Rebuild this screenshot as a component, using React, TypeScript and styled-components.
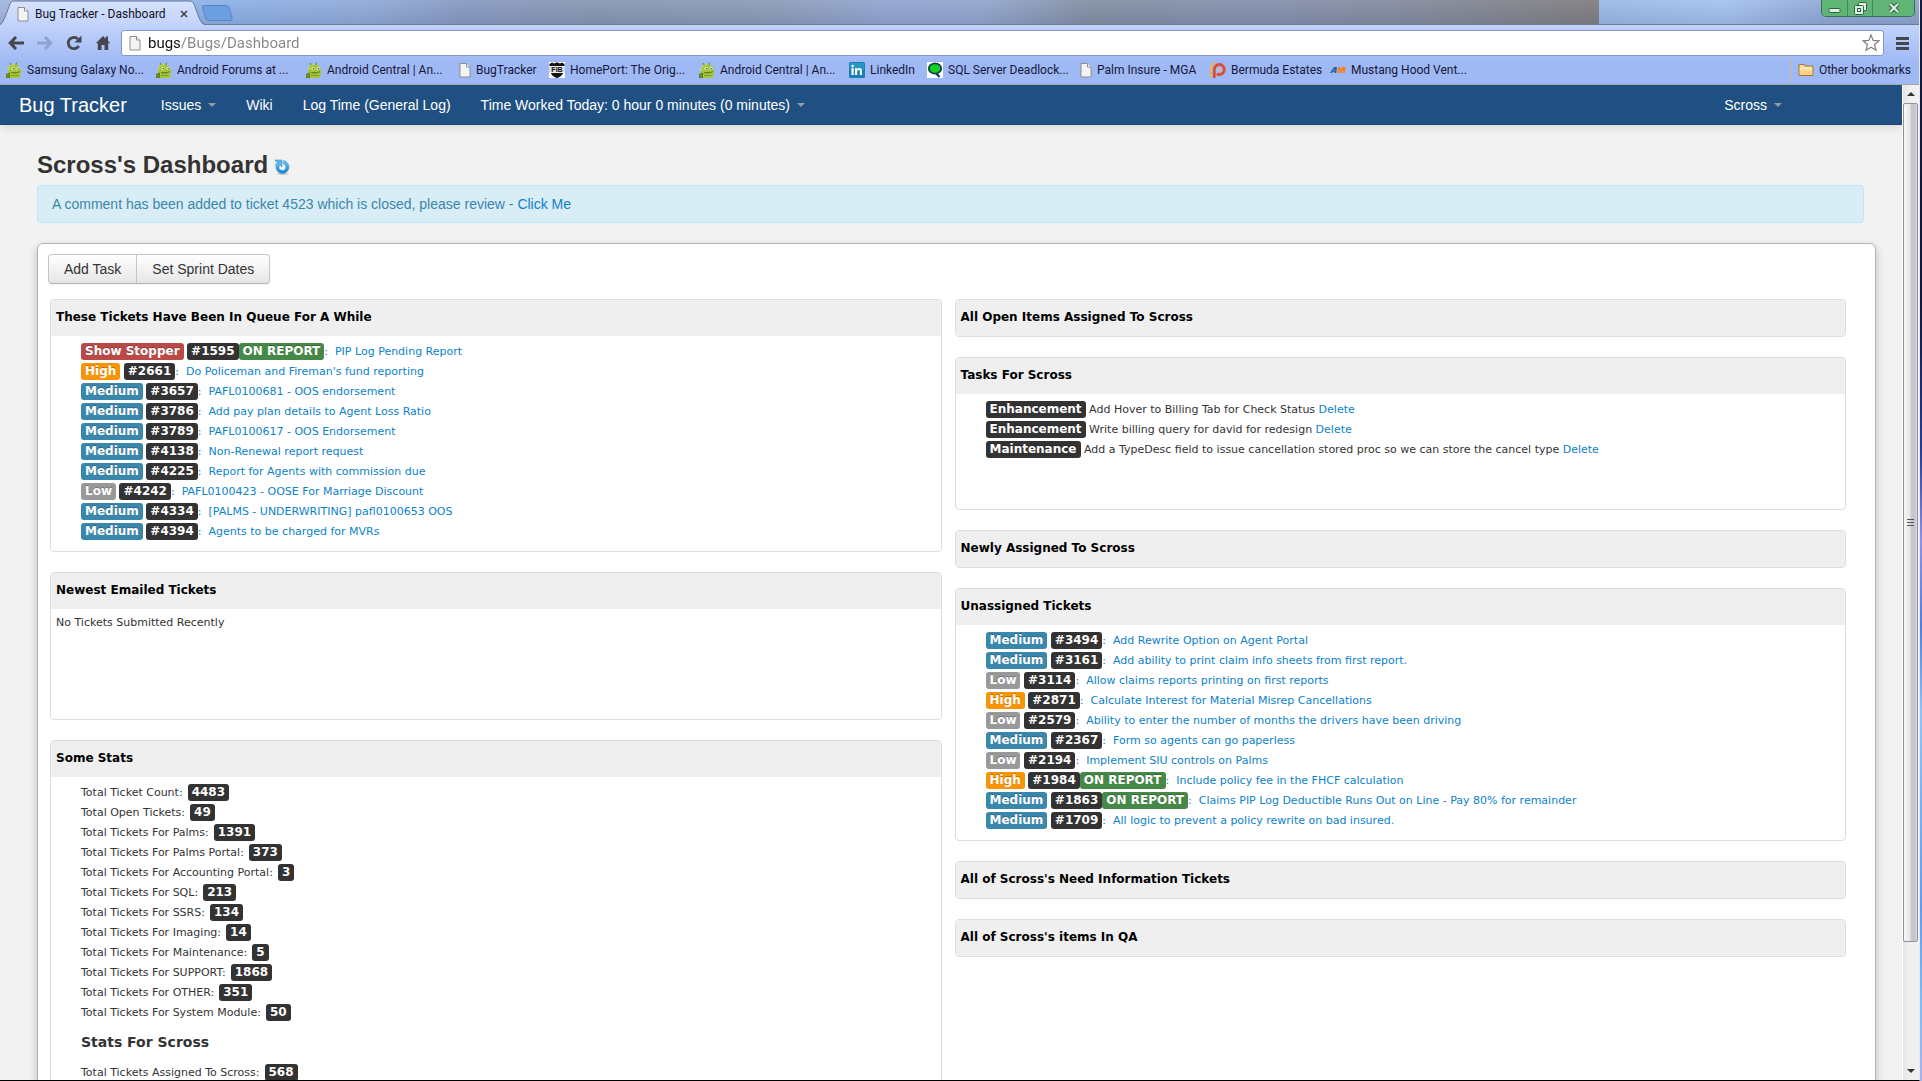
import React from "react";
import styled, { createGlobalStyle, css } from "styled-components";

const ui = `Roboto, "Open Sans", sans-serif`;
const arial = `"Liberation Sans", Arial, sans-serif`;
const verdana = `"DejaVu Sans", Verdana, sans-serif`;

const GlobalStyle = createGlobalStyle`
  *, *::before, *::after { box-sizing: border-box; }
  body { margin: 0; overflow: hidden; font-family: ${arial}; font-size: 14px; line-height: 20px; color: #333; }
  a { color: #0c82cb; text-decoration: none; }
  h1, h2, h3, ul, p { margin: 0; padding: 0; }
  ul { list-style: none; }
  button { padding: 0; border: 0; background: none; font: inherit; color: inherit; }
  svg { display: block; flex: none; }
`;

const Desktop = styled.div`
  display: flex;
  height: 100vh;
  background: linear-gradient(#131a3a 0, #10163a 28%, #243f9c 42%, #8d90ea 50%, #4d7fe0 58%, #8cc4fa 66%, #5f9cf0 84%, #7bbdfc 93%, #a9b0ee 100%);
`;

const BrowserWindow = styled.div`
  flex: 1;
  min-width: 0;
  margin-right: 2px;
  display: flex;
  flex-direction: column;
  background: #9fb9f4;
  border-right: 1px solid #e3ebfb;
  border-bottom: 1px solid #000;
`;

const TitleBar = styled.header`
  display: flex;
  align-items: flex-start;
  height: 25px;
  flex: none;
  border-bottom: 1px solid #6c7c9c;
  background:
    linear-gradient(rgba(255, 255, 255, 0.05), rgba(40, 50, 90, 0.12)),
    linear-gradient(90deg, #a5b8de 0, #8fb2e8 12%, #92add9 19%, #8a9cc4 24%, #8a98b3 31%, #8e9db8 40%, #94a7d2 46%, #95a8d0 51%, #8590a4 57%, #8793b0 65%, #868da0 73%, #817f80 83.3%, #9dbbe6 83.3%, #a6c3f1 90%, #92acd8 95%, #8fa5cf 100%);
`;

const Tab = styled.div`
  position: relative;
  display: flex;
  align-items: center;
  width: 205px;
  height: 25px;
  padding: 2px 14px 0 17px;
  font: 12px/20px ${ui};
  color: #141428;
`;

const TabShape = styled.svg`
  position: absolute;
  left: 0;
  top: 0;
`;

const TabLabel = styled.span`
  position: relative;
  flex: 1;
  margin-left: 6px;
  white-space: nowrap;
`;

const TabIcon = styled.span`
  position: relative;
`;

const TabClose = styled.button`
  position: relative;
  width: 14px;
  height: 14px;
  display: grid;
  place-items: center;
`;

const NewTab = styled.button`
  margin-top: 5px;
  margin-left: -4px;
`;

const WindowControls = styled.div`
  display: flex;
  height: 17px;
  margin-left: auto;
  margin-right: 4px;
  border: 1px solid #3b6e55;
  border-top: 0;
  border-radius: 0 0 5px 5px;
  overflow: hidden;
`;

const WindowButton = styled.button<{ $wide?: boolean }>`
  width: ${(p) => (p.$wide ? 42 : 25)}px;
  display: grid;
  place-items: center;
  background: #60b476;
  & + & { border-left: 1px solid #3f8a5c; }
`;

const Toolbar = styled.div`
  display: flex;
  align-items: center;
  height: 35px;
  flex: none;
  padding: 1px 2px 0 1px;
  background: linear-gradient(#c2d3fb, #a2bbf5);
`;

const ToolButton = styled.button`
  width: 29px;
  height: 25px;
  display: grid;
  place-items: center;
  color: #46474c;
`;

const Omnibox = styled.label`
  flex: 1;
  display: flex;
  align-items: center;
  height: 26px;
  margin: 0 4px;
  padding: 0 3px 0 7px;
  background: #fff;
  border: 1px solid #7f97cd;
  border-radius: 3px;
`;

const Address = styled.input`
  flex: 1;
  min-width: 0;
  height: 22px;
  margin-left: 7px;
  padding: 0;
  border: 0;
  outline: 0;
  font: 15px/22px ${ui};
  color: transparent;
  background: linear-gradient(90deg, #111 33px, #868686 33px);
  -webkit-background-clip: text;
  background-clip: text;
`;

const BookmarkBar = styled.nav`
  display: flex;
  align-items: center;
  height: 25px;
  flex: none;
  padding: 0 8px 4px 6px;
  border-bottom: 1px solid #a5a6a4;
  font: 12px/16px ${ui};
`;

const Bookmark = styled.a<{ $width: number }>`
  display: flex;
  align-items: center;
  gap: 5px;
  width: ${(p) => p.$width}px;
  color: #16163a;
  white-space: nowrap;
`;

const OtherBookmarks = styled.button`
  display: flex;
  align-items: center;
  gap: 5px;
  height: 23px;
  margin-left: auto;
  padding-left: 7px;
  border-left: 1px solid #d9b98e;
  color: #16163a;
`;

const Viewport = styled.div`
  display: flex;
  flex: 1;
  min-height: 0;
`;

const Page = styled.div`
  flex: 1;
  min-width: 0;
  overflow: hidden;
  background: #f2f2f2;
`;

const NavBar = styled.nav`
  display: flex;
  align-items: center;
  height: 40px;
  padding: 0 105px 0 19px;
  background: #205081;
  border-bottom: 1px solid #1a4472;
  box-shadow: 0 1px 10px rgba(0, 0, 0, 0.15);
`;

const Brand = styled.a`
  margin-right: 19px;
  font-size: 20px;
  color: #fff;
`;

const NavLink = styled.a<{ $right?: boolean }>`
  display: flex;
  align-items: center;
  gap: 7px;
  padding: 0 15px;
  color: #fff;
  ${(p) => p.$right && css`margin-left: auto;`}
`;

const Caret = styled.span`
  border: 4px solid transparent;
  border-top-color: #909cac;
  border-bottom: 0;
`;

const Main = styled.main`
  padding: 20px 26px 0 37px;
`;

const Title = styled.h1`
  display: flex;
  align-items: center;
  gap: 6px;
  font-size: 24px;
  line-height: 40px;
`;

const RefreshButton = styled.button`
  padding-top: 4px;
`;

const Alert = styled.div`
  height: 38px;
  margin: 0 12px 20px 0;
  padding: 8px 14px;
  border: 1px solid #bce8f1;
  border-radius: 4px;
  background: #d9edf7;
  color: #3a87ad;
`;

const Panel = styled.section`
  padding: 10px 29px 40px 10px;
  border: 1px solid #b3b3b3;
  border-radius: 6px;
  background: #fff;
  box-shadow: 0 4px 10px rgba(0, 0, 0, 0.22);
`;

const ButtonGroup = styled.div`
  display: flex;
  margin-bottom: 15px;
`;

const Button = styled.button`
  height: 30px;
  padding: 0 15px;
  border: 1px solid #c5c5c5;
  border-bottom-color: #b3b3b3;
  background: linear-gradient(#fff, #e6e6e6);
  box-shadow: 0 1px 2px rgba(0, 0, 0, 0.05);
  line-height: 20px;
  &:first-child { border-radius: 4px 0 0 4px; }
  &:last-child { border-radius: 0 4px 4px 0; }
  & + & { margin-left: -1px; }
`;

const Columns = styled.div`
  display: grid;
  grid-template-columns: 1fr 1fr;
  gap: 13px;
  padding-left: 2px;
  font-family: ${verdana};
  font-size: 11px;
`;

const Column = styled.div`
  display: flex;
  flex-direction: column;
  gap: 20px;
`;

const Card = styled.section`
  border: 1px solid #dddddd;
  border-radius: 4px;
  overflow: hidden;
`;

const CardTitle = styled.h2`
  height: 36px;
  padding: 0 5px;
  background: #efefef;
  color: #000;
  font-size: 12px;
  line-height: 35px;
`;

const CardBody = styled.div<{ $min?: number }>`
  min-height: ${(p) => p.$min ?? 0}px;
  padding: 6px 5px 9px 30px;
`;

const EmptyBody = styled.p`
  min-height: 110px;
  padding: 4px 5px;
`;

const Row = styled.li`
  height: 20px;
  white-space: nowrap;
`;

const tones = {
  dark: "#333333",
  red: "#b94a48",
  orange: "#f89406",
  blue: "#3a87ad",
  gray: "#999999",
  green: "#468847",
};

const Badge = styled.span<{ $tone: keyof typeof tones }>`
  display: inline-block;
  padding: 1px 4px 2px;
  border-radius: 3px;
  background: ${(p) => tones[p.$tone]};
  color: #fff;
  font-size: 12px;
  font-weight: bold;
  line-height: 14px;
  text-shadow: 0 -1px 0 rgba(0, 0, 0, 0.25);
`;

const StatName = styled.span`
  margin-right: 5px;
`;

const SubHeading = styled.h3`
  margin: 9px 0 11px;
  font-size: 14px;
  line-height: 20px;
`;

const ScrollBar = styled.div`
  display: flex;
  flex-direction: column;
  align-items: center;
  width: 17px;
  padding-right: 1px;
  border-left: 1px solid #fff;
  background: linear-gradient(90deg, #e4e4e4, #efefef 40%, #f1f1f1);
`;

const ScrollArrow = styled.button`
  width: 15px;
  height: 18px;
  display: grid;
  place-items: center;
`;

const ScrollTrack = styled.div`
  flex: 1;
  width: 15px;
  display: grid;
  grid-template-rows: 7fr 1fr;
`;

const ScrollThumb = styled.div`
  display: grid;
  place-items: center;
  border: 1px solid #929294;
  border-radius: 2px;
  background: linear-gradient(90deg, #f7f7f7, #e6e6e8 45%, #c9c9ce 55%, #c3c3ca 85%, #dedee2);
`;

const DocIcon = () => (
  <svg width="12" height="16" viewBox="0 0 12 16">
    <path d="M1 1.5h6.5l3.5 3.5v10H1z" fill="#f4f4f4" stroke="#8d8d8d" />
    <path d="M7.5 1.5V5H11" fill="#fff" stroke="#8d8d8d" />
  </svg>
);

const AndroidIcon = () => (
  <svg width="16" height="16" viewBox="0 0 16 16">
    <path d="M4 1.2 5.600 3.400M10.600.600 9.800 3" stroke="#6f8c24" strokeWidth="1.200" />
    <path d="M2 9C1.600 5 4.300 2.400 8 2.400c3.600 0 6.100 2 6.400 5.200L15.600 8l-.800 3.500c-.6 1.600-1 3-1 4.500H1c0-2 .100-3.200 1-4.500z" fill="#a4c639" />
    <path d="M2.200 8.500C1.800 5 4.500 2.600 8 2.600" stroke="#c5e05f" fill="none" />
    <circle cx="7" cy="6.600" r="1.600" fill="#e9f4c4" />
    <circle cx="12" cy="6.600" r="1.500" fill="#e9f4c4" />
    <circle cx="7.300" cy="6.700" r=".7" fill="#32400f" />
    <circle cx="12.200" cy="6.700" r=".7" fill="#32400f" />
    <path d="M5 10.300c2.500 1.300 5 .9 9-.6M0 12.500 3.500 11v5H0z" fill="#6f9125" stroke="#55701b" strokeWidth=".8" />
    <path d="M5 13.500h8" stroke="#7d9e2b" />
  </svg>
);

const ShieldIcon = () => (
  <svg width="16" height="16" viewBox="0 0 16 16">
    <path d="M0 0h16v16H0z" fill="#fff" />
    <path d="M.5 2 3 .5 5 1.400 8 .300l3 1.100L13 .500 15.500 2v2H.5zM2 11h12c-.5 2.500-3 4-6 5-3-1-5.500-2.500-6-5z" fill="#111" />
    <path d="M0 4.500h16v6H0z" fill="#ddd" />
    <text x="8" y="10" textAnchor="middle" fontSize="7" fontWeight="bold" fontFamily="Liberation Sans, sans-serif" fill="#111">FIB</text>
  </svg>
);

const LinkedInIcon = () => (
  <svg width="16" height="16" viewBox="0 0 16 16">
    <rect width="16" height="16" rx="1.500" fill="#1681b2" />
    <rect x="1" y="1" width="14" height="7" fill="#38a3cd" opacity=".6" />
    <path d="M2.500 6.200h2.200V13H2.500zM6 6.200h2.100v.9c.5-.7 1.200-1.100 2.200-1.100 2 0 2.700 1.200 2.700 3.200V13h-2.200V9.600c0-1-.3-1.700-1.200-1.700-1 0-1.400.7-1.400 1.700V13H6z" fill="#fff" />
    <circle cx="3.600" cy="4" r="1.300" fill="#fff" />
  </svg>
);

const QIcon = () => (
  <svg width="16" height="16" viewBox="0 0 16 16">
    <path d="M0 0h16v16H0z" fill="#fff" />
    <path d="m8 10 4.500 5" stroke="#15307c" strokeWidth="2.200" />
    <ellipse cx="8" cy="6.500" rx="6.200" ry="5.200" fill="#12d31d" stroke="#1a3f4c" strokeWidth="1.800" />
  </svg>
);

const PIcon = () => (
  <svg width="16" height="16" viewBox="0 0 16 16" fill="none">
    <path d="M1 15V6.500C1 3 2.500 1.500 5 .800" stroke="#eeb255" strokeWidth="1.800" />
    <path d="M4.300 16V7.500a5 5 0 1 1 5 5c-1 0-1.800-.2-2.500-.700" stroke="#e2492f" strokeWidth="2.800" />
    <circle cx="9.200" cy="7.500" r="1.600" fill="#ecb98a" />
  </svg>
);

const AmIcon = () => (
  <svg width="16" height="16" viewBox="0 0 16 16">
    <path d="M0 11 4 5h3L6.200 11H4.300l.2-1.300H2.800L2 11zM3.700 8.400h1L5 6.500z" fill="#2460a8" />
    <path d="m7 11 1.200-6h2l.4 2.600L12 5h3.800l-1.200 6h-1.900l.6-3.200L11 11H9.900l-.500-3L8.800 11z" fill="#f77f1e" />
  </svg>
);

const FolderIcon = () => (
  <svg width="16" height="16" viewBox="0 0 16 16">
    <path d="M1 13.500v-11h5l1 1.500h8v9.500z" fill="#fddc98" stroke="#a5753a" />
    <path d="M2 6.500h12" stroke="#fff0c8" />
    <path d="M2 9h12v4H2z" fill="#f9cb7b" opacity=".7" />
  </svg>
);

const RefreshIcon = () => (
  <svg width="16" height="16" viewBox="0 0 16 16">
    <defs>
      <linearGradient id="ring" x1="0" y1="0" x2="0" y2="1">
        <stop offset="0" stopColor="#7cc6f3" />
        <stop offset="0.500" stopColor="#3aa3e6" />
        <stop offset="1" stopColor="#1583d3" />
      </linearGradient>
    </defs>
    <ellipse cx="8.500" cy="15" rx="6" ry="1" fill="#cfcfcf" />
    <path d="M9.500 1.600A6.500 6.500 0 1 1 2 7.500L5.200 7a3.400 3.400 0 1 0 4.300-2.100z" fill="url(#ring)" stroke="#2a86c6" strokeWidth=".5" />
    <path d="M1 1h7v7L6 6 3.600 8.200 1.200 6.200 3.300 3.800z" fill="#5db6ee" stroke="#2a86c6" strokeWidth=".5" />
  </svg>
);

const bookmarks: { title: string; width: number; icon: React.ReactNode }[] = [
  { title: "Samsung Galaxy No...", width: 150, icon: <AndroidIcon /> },
  { title: "Android Forums at ...", width: 150, icon: <AndroidIcon /> },
  { title: "Android Central | An...", width: 153, icon: <AndroidIcon /> },
  { title: "BugTracker", width: 90, icon: <DocIcon /> },
  { title: "HomePort: The Orig...", width: 150, icon: <ShieldIcon /> },
  { title: "Android Central | An...", width: 150, icon: <AndroidIcon /> },
  { title: "LinkedIn", width: 78, icon: <LinkedInIcon /> },
  { title: "SQL Server Deadlock...", width: 153, icon: <QIcon /> },
  { title: "Palm Insure - MGA", width: 130, icon: <DocIcon /> },
  { title: "Bermuda Estates", width: 120, icon: <PIcon /> },
  { title: "Mustang Hood Vent...", width: 150, icon: <AmIcon /> },
];

type Priority = "Show Stopper" | "High" | "Medium" | "Low";
type Ticket = { priority: Priority; id: number; title: string; onReport?: boolean };

const priorityTone: Record<Priority, keyof typeof tones> = {
  "Show Stopper": "red",
  High: "orange",
  Medium: "blue",
  Low: "gray",
};

const queued: Ticket[] = [
  { priority: "Show Stopper", id: 1595, title: "PIP Log Pending Report", onReport: true },
  { priority: "High", id: 2661, title: "Do Policeman and Fireman's fund reporting" },
  { priority: "Medium", id: 3657, title: "PAFL0100681 - OOS endorsement" },
  { priority: "Medium", id: 3786, title: "Add pay plan details to Agent Loss Ratio" },
  { priority: "Medium", id: 3789, title: "PAFL0100617 - OOS Endorsement" },
  { priority: "Medium", id: 4138, title: "Non-Renewal report request" },
  { priority: "Medium", id: 4225, title: "Report for Agents with commission due" },
  { priority: "Low", id: 4242, title: "PAFL0100423 - OOSE For Marriage Discount" },
  { priority: "Medium", id: 4334, title: "[PALMS - UNDERWRITING] pafl0100653 OOS" },
  { priority: "Medium", id: 4394, title: "Agents to be charged for MVRs" },
];

const unassigned: Ticket[] = [
  { priority: "Medium", id: 3494, title: "Add Rewrite Option on Agent Portal" },
  { priority: "Medium", id: 3161, title: "Add ability to print claim info sheets from first report." },
  { priority: "Low", id: 3114, title: "Allow claims reports printing on first reports" },
  { priority: "High", id: 2871, title: "Calculate Interest for Material Misrep Cancellations" },
  { priority: "Low", id: 2579, title: "Ability to enter the number of months the drivers have been driving" },
  { priority: "Medium", id: 2367, title: "Form so agents can go paperless" },
  { priority: "Low", id: 2194, title: "Implement SIU controls on Palms" },
  { priority: "High", id: 1984, title: "Include policy fee in the FHCF calculation", onReport: true },
  { priority: "Medium", id: 1863, title: "Claims PIP Log Deductible Runs Out on Line - Pay 80% for remainder", onReport: true },
  { priority: "Medium", id: 1709, title: "All logic to prevent a policy rewrite on bad insured." },
];

const tasks = [
  { kind: "Enhancement", text: "Add Hover to Billing Tab for Check Status" },
  { kind: "Enhancement", text: "Write billing query for david for redesign" },
  { kind: "Maintenance", text: "Add a TypeDesc field to issue cancellation stored proc so we can store the cancel type" },
];

const stats: [string, number][] = [
  ["Total Ticket Count", 4483],
  ["Total Open Tickets", 49],
  ["Total Tickets For Palms", 1391],
  ["Total Tickets For Palms Portal", 373],
  ["Total Tickets For Accounting Portal", 3],
  ["Total Tickets For SQL", 213],
  ["Total Tickets For SSRS", 134],
  ["Total Tickets For Imaging", 14],
  ["Total Tickets For Maintenance", 5],
  ["Total Tickets For SUPPORT", 1868],
  ["Total Tickets For OTHER", 351],
  ["Total Tickets For System Module", 50],
];

const TicketList = ({ items }: { items: Ticket[] }) => (
  <ul>
    {items.map((t) => (
      <Row key={t.id}>
        <Badge $tone={priorityTone[t.priority]}>{t.priority}</Badge>{" "}
        <Badge $tone="dark">#{t.id}</Badge>
        {t.onReport && <Badge $tone="green">ON REPORT</Badge>}
        <a href="#ticket">:&nbsp; {t.title}</a>
      </Row>
    ))}
  </ul>
);

const StatList = ({ items }: { items: [string, number][] }) => (
  <ul>
    {items.map(([label, count]) => (
      <Row key={label}>
        <StatName>{label}:</StatName>
        <Badge $tone="dark">{count}</Badge>
      </Row>
    ))}
  </ul>
);

export default function App() {
  return (
    <>
      <GlobalStyle />
      <Desktop>
        <BrowserWindow>
          <TitleBar>
            <Tab>
              <TabShape width="205" height="25" viewBox="0 0 205 25">
                <defs>
                  <linearGradient id="tab" x1="0" y1="0" x2="0" y2="1">
                    <stop offset="0" stopColor="#d6e2fd" />
                    <stop offset="1" stopColor="#c2d3fb" />
                  </linearGradient>
                </defs>
                <path d="M0 25C3 24 4 20 10 4c1-2 2-3 4-3h175c3 0 4 1 5 3 6 16 6 19 11 21z" fill="url(#tab)" />
                <path d="M0 24C3 23 4 20 10 4c1-2 2-3 4-3h175c3 0 4 1 5 3 6 16 6 18.500 11 20.500" fill="none" stroke="#62729a" />
              </TabShape>
              <TabIcon><DocIcon /></TabIcon>
              <TabLabel>Bug Tracker - Dashboard</TabLabel>
              <TabClose aria-label="Close tab">
                <svg width="8" height="8" viewBox="0 0 8 8"><path d="m1 1 6 6M7 1 1 7" stroke="#444" strokeWidth="1.600" /></svg>
              </TabClose>
            </Tab>
            <NewTab aria-label="New tab">
              <svg width="32" height="16" viewBox="0 0 32 16">
                <path d="M3 .5h22c1.500 0 2.500 1 3 2l3 10c.5 2-.5 3-2 3H8c-1.500 0-2.500-1-3-2L1.500 3C1 1.500 1.500.5 3 .5z" fill="#6c9fdf" stroke="#5c83bf" />
              </svg>
            </NewTab>
            <WindowControls>
              <WindowButton aria-label="Minimize">
                <svg width="13" height="12" viewBox="0 0 13 12"><rect x="1" y="6.500" width="11" height="4" rx="1" fill="#e0efe3" stroke="#2d6144" /></svg>
              </WindowButton>
              <WindowButton aria-label="Restore">
                <svg width="13" height="13" viewBox="0 0 13 13" fill="#e0efe3" stroke="#2d6144">
                  <rect x="4.500" y=".5" width="8" height="8" rx="1" />
                  <rect x=".5" y="3.500" width="9" height="9" rx="1" />
                  <rect x="3.500" y="6.500" width="3" height="3" />
                </svg>
              </WindowButton>
              <WindowButton $wide aria-label="Close">
                <svg width="12" height="12" viewBox="0 0 12 12">
                  <path d="m2 2 8 8M10 2 2 10" stroke="#2d6144" strokeWidth="4" />
                  <path d="m2 2 8 8M10 2 2 10" stroke="#e0efe3" strokeWidth="2.200" />
                </svg>
              </WindowButton>
            </WindowControls>
          </TitleBar>

          <Toolbar>
            <ToolButton aria-label="Back">
              <svg width="16" height="14" viewBox="0 0 16 14" fill="none" stroke="currentColor" strokeWidth="3"><path d="M2 7h14M8 1 2.200 7 8 13" /></svg>
            </ToolButton>
            <ToolButton aria-label="Forward">
              <svg width="16" height="14" viewBox="0 0 16 14" fill="none" stroke="#8ea3d3" strokeWidth="3"><path d="M0 7h14M8 1l5.800 6L8 13" /></svg>
            </ToolButton>
            <ToolButton aria-label="Reload">
              <svg width="16" height="16" viewBox="0 0 16 16"><path d="M12.800 11A5.700 5.700 0 1 1 12 4" fill="none" stroke="currentColor" strokeWidth="2.800" /><path d="M15.500.5v7H8.500z" fill="currentColor" /></svg>
            </ToolButton>
            <ToolButton aria-label="Home">
              <svg width="16" height="16" viewBox="0 0 16 16"><path d="M8 1 0.800 8.200h2V15h3.700v-5h3v5h3.700V8.200h2L13 5.800V1.500h-2.200v2.200z" fill="currentColor" /></svg>
            </ToolButton>
            <Omnibox>
              <DocIcon />
              <Address aria-label="Address" defaultValue="bugs/Bugs/Dashboard" />
              <svg width="18" height="18" viewBox="0 0 18 18"><path d="m9 1 2.200 5.400 5.800.4-4.500 3.700 1.500 5.800L9 13.200l-5 3.100 1.500-5.800L1 6.800l5.800-.4z" fill="#fff" stroke="#808080" strokeWidth="1.200" /></svg>
            </Omnibox>
            <ToolButton aria-label="Menu">
              <svg width="13" height="13" viewBox="0 0 13 13"><path d="M0 1.500h13M0 6.500h13M0 11.500h13" stroke="currentColor" strokeWidth="3" /></svg>
            </ToolButton>
          </Toolbar>

          <BookmarkBar aria-label="Bookmarks">
            {bookmarks.map((b, i) => (
              <Bookmark key={i} href="#bookmark" $width={b.width}>{b.icon}{b.title}</Bookmark>
            ))}
            <OtherBookmarks><FolderIcon />Other bookmarks</OtherBookmarks>
          </BookmarkBar>

          <Viewport>
            <Page>
              <NavBar>
                <Brand href="#home">Bug Tracker</Brand>
                <NavLink href="#issues">Issues<Caret /></NavLink>
                <NavLink href="#wiki">Wiki</NavLink>
                <NavLink href="#log">Log Time (General Log)</NavLink>
                <NavLink href="#time">Time Worked Today: 0 hour 0 minutes (0 minutes)<Caret /></NavLink>
                <NavLink href="#user" $right>Scross<Caret /></NavLink>
              </NavBar>
              <Main>
                <Title>
                  Scross's Dashboard
                  <RefreshButton aria-label="Refresh"><RefreshIcon /></RefreshButton>
                </Title>
                <Alert role="status">
                  A comment has been added to ticket 4523 which is closed, please review - <a href="#review">Click Me</a>
                </Alert>
                <Panel>
                  <ButtonGroup>
                    <Button>Add Task</Button>
                    <Button>Set Sprint Dates</Button>
                  </ButtonGroup>
                  <Columns>
                    <Column>
                      <Card>
                        <CardTitle>These Tickets Have Been In Queue For A While</CardTitle>
                        <CardBody><TicketList items={queued} /></CardBody>
                      </Card>
                      <Card>
                        <CardTitle>Newest Emailed Tickets</CardTitle>
                        <EmptyBody>No Tickets Submitted Recently</EmptyBody>
                      </Card>
                      <Card>
                        <CardTitle>Some Stats</CardTitle>
                        <CardBody>
                          <StatList items={stats} />
                          <SubHeading>Stats For Scross</SubHeading>
                          <StatList items={[["Total Tickets Assigned To Scross", 568]]} />
                        </CardBody>
                      </Card>
                    </Column>
                    <Column>
                      <Card><CardTitle>All Open Items Assigned To Scross</CardTitle></Card>
                      <Card>
                        <CardTitle>Tasks For Scross</CardTitle>
                        <CardBody $min={115}>
                          <ul>
                            {tasks.map((t) => (
                              <Row key={t.text}>
                                <Badge $tone="dark">{t.kind}</Badge> {t.text} <a href="#delete">Delete</a>
                              </Row>
                            ))}
                          </ul>
                        </CardBody>
                      </Card>
                      <Card><CardTitle>Newly Assigned To Scross</CardTitle></Card>
                      <Card>
                        <CardTitle>Unassigned Tickets</CardTitle>
                        <CardBody><TicketList items={unassigned} /></CardBody>
                      </Card>
                      <Card><CardTitle>All of Scross's Need Information Tickets</CardTitle></Card>
                      <Card><CardTitle>All of Scross's items In QA</CardTitle></Card>
                    </Column>
                  </Columns>
                </Panel>
              </Main>
            </Page>
            <ScrollBar>
              <ScrollArrow aria-label="Scroll up">
                <svg width="8" height="4" viewBox="0 0 8 4"><path d="m0 4 4-4 4 4z" fill="#333" /></svg>
              </ScrollArrow>
              <ScrollTrack>
                <ScrollThumb>
                  <svg width="7" height="8" viewBox="0 0 7 8"><path d="M0 .5h7M0 3.500h7M0 6.500h7" stroke="#555" /></svg>
                </ScrollThumb>
              </ScrollTrack>
              <ScrollArrow aria-label="Scroll down">
                <svg width="8" height="4" viewBox="0 0 8 4"><path d="m0 0 4 4 4-4z" fill="#333" /></svg>
              </ScrollArrow>
            </ScrollBar>
          </Viewport>
        </BrowserWindow>
      </Desktop>
    </>
  );
}
